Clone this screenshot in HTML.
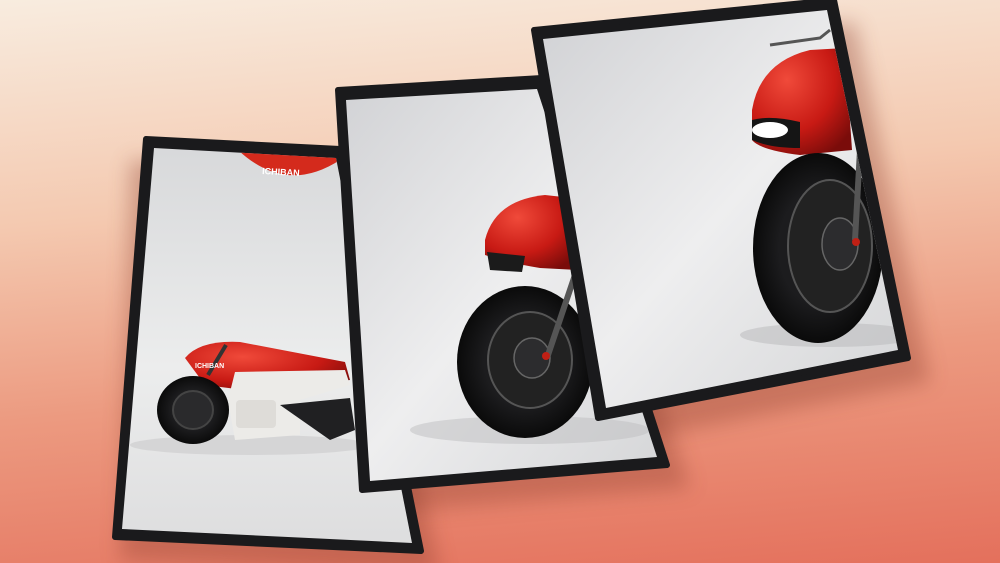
<!DOCTYPE html>
<html><head><style>
html,body{margin:0;padding:0;width:1000px;height:563px;overflow:hidden}
body{background:linear-gradient(175deg,#f8ecdf 0%,#f4c9b0 35%,#ec9a80 65%,#e4705c 100%)}
svg{position:absolute;left:0;top:0}
</style></head><body>
<svg width="1000" height="563" viewBox="0 0 1000 563" xmlns="http://www.w3.org/2000/svg">
<defs>
<linearGradient id="scr" x1="0" y1="0" x2="0" y2="1">
<stop offset="0" stop-color="#d6d7d9"/><stop offset="0.55" stop-color="#eceded"/><stop offset="1" stop-color="#dcdcdd"/></linearGradient>
<linearGradient id="scr2" x1="0" y1="0" x2="1" y2="1">
<stop offset="0" stop-color="#cfd0d3"/><stop offset="0.5" stop-color="#eeeeef"/><stop offset="1" stop-color="#d2d3d5"/></linearGradient>
<radialGradient id="red" cx="0.35" cy="0.3" r="0.8"><stop offset="0" stop-color="#f04a3a"/><stop offset="0.6" stop-color="#c81a14"/><stop offset="1" stop-color="#7a0c0a"/></radialGradient>
<radialGradient id="tire" cx="0.5" cy="0.5" r="0.5"><stop offset="0.6" stop-color="#1c1c1e"/><stop offset="1" stop-color="#0a0a0a"/></radialGradient>
<filter id="sh" x="-20%" y="-20%" width="150%" height="150%"><feGaussianBlur stdDeviation="10"/></filter>
<clipPath id="c1"><polygon points="154,148 336,158 412,543 122,529"/></clipPath>
<clipPath id="c2"><polygon points="346,100 537,89 657,457 370,481"/></clipPath>
<clipPath id="c3"><polygon points="543,39 827,10 898,350 606,408"/></clipPath>
</defs>
<polygon points="130,160 355,172 440,575 120,560" fill="#8a3a2c" opacity="0.35" filter="url(#sh)"/>
<polygon points="355,112 560,100 690,488 385,512" fill="#8a3a2c" opacity="0.35" filter="url(#sh)"/>
<polygon points="555,52 855,22 930,382 625,442" fill="#8a3a2c" opacity="0.35" filter="url(#sh)"/>

<!-- tablet 1 -->
<polygon points="146,139 340,149 421,551 115,537" fill="#1a1a1c" stroke="#1a1a1c" stroke-width="6" stroke-linejoin="round"/>
<g clip-path="url(#c1)">
<rect x="100" y="130" width="330" height="430" fill="url(#scr)"/>
<path d="M238,150 Q286,195 340,160 L340,150 Z" fill="#d42a1c"/>
<text x="262" y="174" font-family="Liberation Sans,sans-serif" font-size="9" font-weight="bold" fill="#fff" transform="rotate(3 262 174)">ICHIBAN</text>
<ellipse cx="250" cy="445" rx="120" ry="10" fill="#c9c9cb" opacity="0.6"/>
<path d="M185,358 Q200,340 240,342 L345,362 L350,380 L260,392 L205,385 Z" fill="url(#red)"/>
<path d="M235,372 L345,370 L350,385 L300,400 L300,435 L235,440 L228,400 Z" fill="#ecebe8"/>
<rect x="236" y="400" width="40" height="28" rx="4" fill="#dedcd8"/>
<path d="M280,405 L350,398 L355,430 L330,440 Z" fill="#202022"/>
<ellipse cx="193" cy="410" rx="36" ry="34" fill="url(#tire)"/>
<ellipse cx="193" cy="410" rx="20" ry="19" fill="#2a2a2c" stroke="#444" stroke-width="2"/>
<line x1="208" y1="375" x2="226" y2="345" stroke="#333" stroke-width="4"/>
<text x="195" y="368" font-family="Liberation Sans,sans-serif" font-size="7" font-weight="bold" fill="#fff">ICHIBAN</text>
</g>

<!-- tablet 2 -->
<polygon points="338,90 542,78 667,465 362,490" fill="#1a1a1c" stroke="#1a1a1c" stroke-width="6" stroke-linejoin="round"/>
<g clip-path="url(#c2)">
<rect x="330" y="70" width="350" height="430" fill="url(#scr2)"/>
<ellipse cx="530" cy="430" rx="120" ry="14" fill="#bdbdbf" opacity="0.5"/>
<path d="M485,240 Q495,200 545,195 L572,198 L578,270 L540,268 Q505,262 485,255 Z" fill="url(#red)"/>
<path d="M487,252 L525,256 L522,272 L490,270 Z" fill="#1b1b1b"/>
<ellipse cx="525" cy="362" rx="68" ry="76" fill="url(#tire)"/>
<ellipse cx="530" cy="360" rx="42" ry="48" fill="#222" stroke="#555" stroke-width="2"/>
<ellipse cx="532" cy="358" rx="18" ry="20" fill="#2c2c2e" stroke="#666" stroke-width="1.5"/>
<line x1="548" y1="355" x2="575" y2="275" stroke="#555" stroke-width="6"/>
<circle cx="546" cy="356" r="4" fill="#c02015"/>
</g>

<!-- tablet 3 -->
<polygon points="534,30 834,0 908,358 598,418" fill="#1a1a1c" stroke="#1a1a1c" stroke-width="6" stroke-linejoin="round"/>
<g clip-path="url(#c3)">
<rect x="530" y="0" width="380" height="430" fill="url(#scr2)"/>
<ellipse cx="830" cy="335" rx="90" ry="12" fill="#b8b8ba" opacity="0.5"/>
<path d="M752,110 Q760,62 810,50 L845,48 L852,150 L800,155 Q760,150 752,140 Z" fill="url(#red)"/>
<path d="M752,120 Q770,115 800,122 L800,148 Q770,148 752,140 Z" fill="#151515"/>
<ellipse cx="770" cy="130" rx="18" ry="8" fill="#fff"/>
<path d="M770,45 L820,38 L830,30" stroke="#555" stroke-width="3" fill="none"/>
<ellipse cx="818" cy="248" rx="65" ry="95" fill="url(#tire)"/>
<ellipse cx="830" cy="246" rx="42" ry="66" fill="#222" stroke="#555" stroke-width="2"/>
<ellipse cx="840" cy="244" rx="18" ry="26" fill="#2c2c2e" stroke="#666" stroke-width="1.5"/>
<line x1="855" y1="240" x2="860" y2="150" stroke="#555" stroke-width="6"/>
<circle cx="856" cy="242" r="4" fill="#c02015"/>
</g>
</svg>
</body></html>
